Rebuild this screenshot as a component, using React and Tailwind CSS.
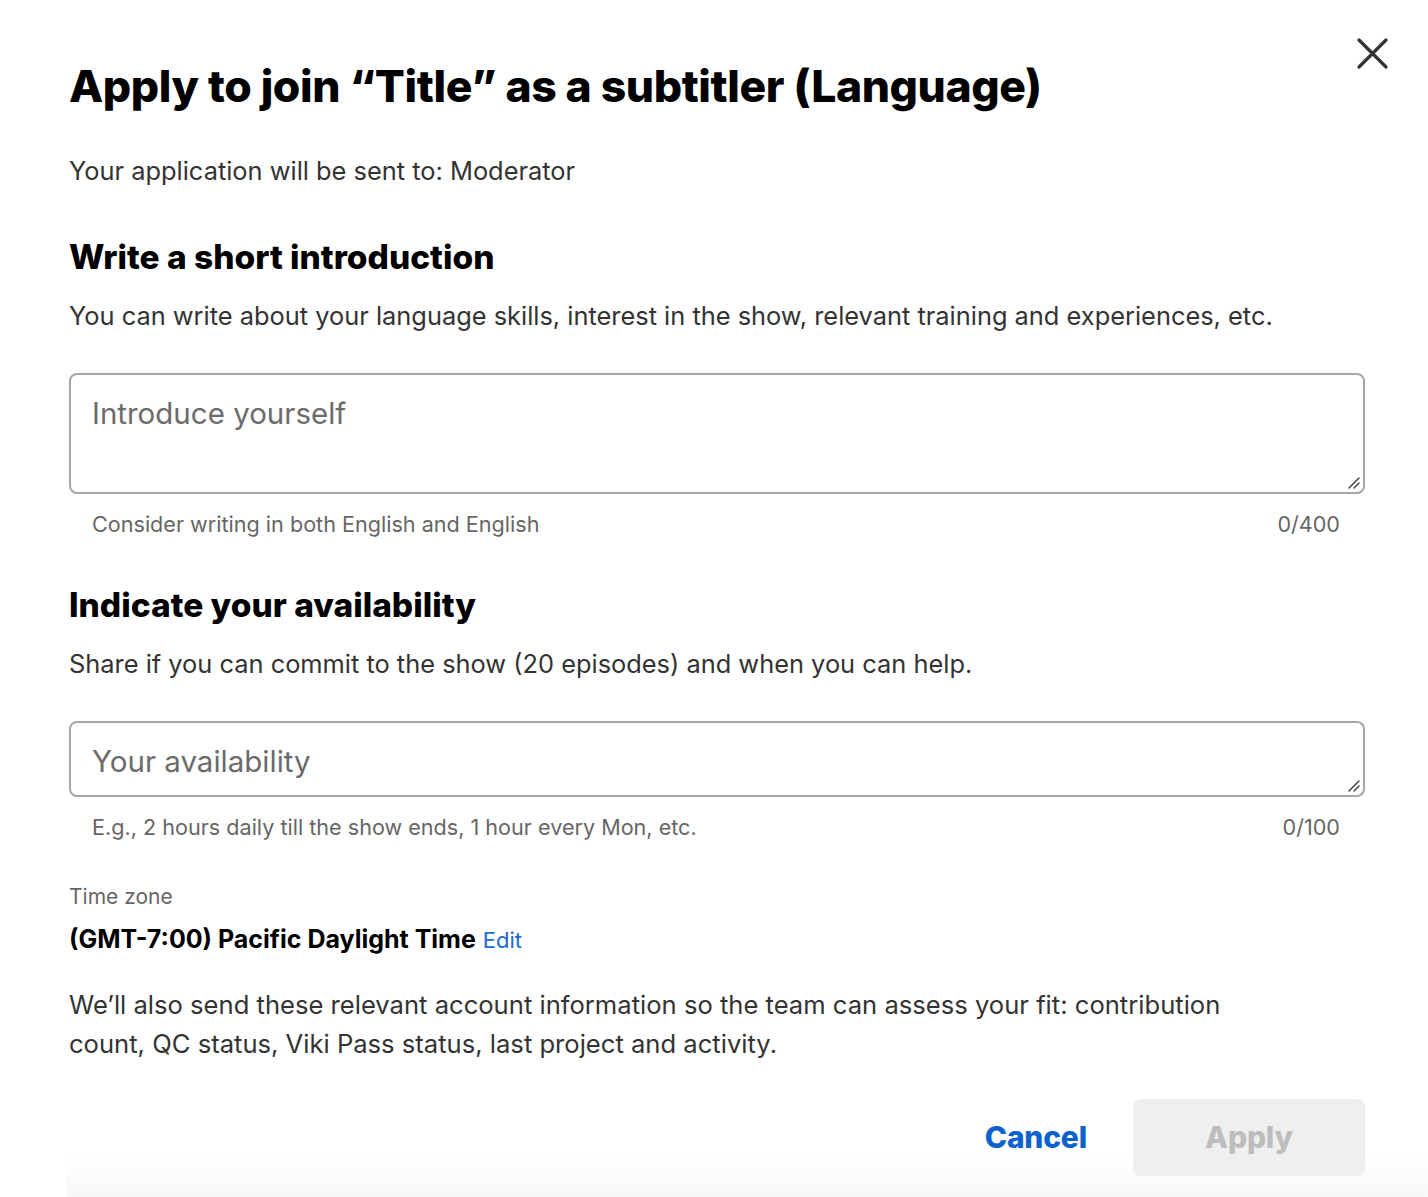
function Field({ placeholder, height, hint, count }) {
  return (
    <div>
      <div className={`relative rounded-lg border-2 border-[#a6a6a6] ${height}`}>
        <textarea
          placeholder={placeholder}
          className="h-full w-full resize-none rounded-lg bg-white px-[21px] pt-[20px] text-[29.5px] leading-[36px] text-[#222] outline-none placeholder:text-[#6b6b6b]"
        />
        <svg className="absolute bottom-[3px] right-[3px]" width="14" height="14" viewBox="0 0 14 14">
          <path d="M3 13 L13 3 M8 13 L13 8" stroke="#444" strokeWidth="1.5" strokeLinecap="round" />
        </svg>
      </div>
      <div className="mt-[15px] flex justify-between pl-[23px] pr-[25px] text-[21.6px] leading-[30px] text-[#666]">
        <span>{hint}</span>
        <span>{count}</span>
      </div>
    </div>
  );
}

export default function App() {
  return (
    <div className="relative min-h-[1197px] w-[1428px] overflow-hidden bg-white font-['Inter',sans-serif] text-[#1b1b1b]">
      <button className="absolute left-[1356px] top-[37px] text-[#333]">
        <svg width="33" height="33" viewBox="0 0 33 33">
          <path d="M3 3 L30 30 M30 3 L3 30" stroke="currentColor" strokeWidth="3.2" strokeLinecap="round" />
        </svg>
      </button>

      <div className="pl-[69px] pr-[63px] pt-[58px]">
        <h1 className="text-[44.5px] font-extrabold leading-[56px] tracking-[-0.4px] text-black">
          Apply to join “Title” as a subtitler (Language)
        </h1>
        <p className="mt-[40px] text-[25.4px] leading-[34px] text-[#333]">
          Your application will be sent to: Moderator
        </p>

        <h2 className="mt-[49px] text-[33.5px] font-extrabold leading-[40px] text-black">
          Write a short introduction
        </h2>
        <p className="mt-[22px] text-[25.4px] leading-[34px] text-[#333]">
          You can write about your language skills, interest in the show, relevant training and experiences, etc.
        </p>
        <div className="mt-[40px]">
          <Field
            placeholder="Introduce yourself"
            height="h-[121px]"
            hint="Consider writing in both English and English"
            count="0/400"
          />
        </div>

        <h2 className="mt-[46px] text-[33.5px] font-extrabold leading-[40px] text-black">
          Indicate your availability
        </h2>
        <p className="mt-[22px] text-[25.4px] leading-[34px] text-[#333]">
          Share if you can commit to the show (20 episodes) and when you can help.
        </p>
        <div className="mt-[40px]">
          <Field
            placeholder="Your availability"
            height="h-[76px]"
            hint="E.g., 2 hours daily till the show ends, 1 hour every Mon, etc."
            count="0/100"
          />
        </div>

        <p className="mt-[40px] text-[21px] leading-[30px] text-[#666]">Time zone</p>
        <p className="mt-[10px] text-[25px] leading-[34px]">
          <span className="font-bold text-black">(GMT-7:00) Pacific Daylight Time</span>{" "}
          <span className="text-[22px] text-[#1a6ad0]">Edit</span>
        </p>
        <p className="mt-[28px] max-w-[1180px] text-[25.6px] leading-[39px] text-[#333]">
          We’ll also send these relevant account information so the team can assess your fit: contribution count, QC status, Viki Pass status, last project and activity.
        </p>
      </div>

      <div className="ml-[67px] mt-[36px] bg-gradient-to-b from-white from-[55%] to-[#f7f7f7] pb-[22px] pr-[63px]">
        <div className="flex items-center justify-end gap-[46px]">
          <button className="text-[30px] font-extrabold tracking-[-0.2px] text-[#0b62cc]">Cancel</button>
          <button
            disabled
            className="h-[77px] w-[232px] rounded-lg bg-[#efefef] text-[30px] font-extrabold tracking-[-0.2px] text-[#bdbdbd]"
          >
            Apply
          </button>
        </div>
      </div>
    </div>
  );
}
